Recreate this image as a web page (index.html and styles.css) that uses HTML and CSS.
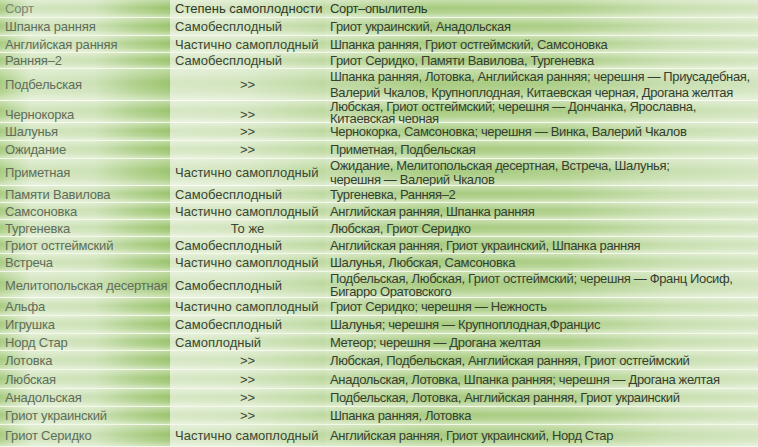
FILE: index.html
```html
<!DOCTYPE html>
<html lang="ru">
<head>
<meta charset="utf-8">
<title>Сорта вишни</title>
<link rel="stylesheet" href="styles.css">
</head>
<body>
<div class="grid" role="table">
  <div class="row head h18" role="row">
    <div class="cell name" role="columnheader">Сорт</div>
    <div class="cell fert" role="columnheader">Степень самоплодности</div>
    <div class="cell poll" role="columnheader">Сорт–опылитель</div>
  </div>
  <div class="row h18" role="row"><div class="cell name">Шпанка ранняя</div><div class="cell fert">Самобесплодный</div><div class="cell poll">Гриот украинский, Анадольская</div></div>
  <div class="row h17" role="row"><div class="cell name">Английская ранняя</div><div class="cell fert">Частично самоплодный</div><div class="cell poll">Шпанка ранняя, Гриот остгеймский, Самсоновка</div></div>
  <div class="row h16" role="row"><div class="cell name">Ранняя–2</div><div class="cell fert">Самобесплодный</div><div class="cell poll">Гриот Серидко, Памяти Вавилова, Тургеневка</div></div>
  <div class="row h32 lh16" role="row"><div class="cell name">Подбельская</div><div class="cell fert mid">&gt;&gt;</div><div class="cell poll">Шпанка ранняя, Лотовка, Английская ранняя; черешня — Приусадебная,<br>Валерий Чкалов, Крупноплодная, Китаевская черная, Дрогана желтая</div></div>
  <div class="row h22 lh12" role="row"><div class="cell name">Чернокорка</div><div class="cell fert mid">&gt;&gt;</div><div class="cell poll">Любская, Гриот остгеймский; черешня — Дончанка, Ярославна,<br>Китаевская черная</div></div>
  <div class="row h18" role="row"><div class="cell name">Шалунья</div><div class="cell fert mid">&gt;&gt;</div><div class="cell poll">Чернокорка, Самсоновка; черешня — Винка, Валерий Чкалов</div></div>
  <div class="row h18" role="row"><div class="cell name">Ожидание</div><div class="cell fert mid">&gt;&gt;</div><div class="cell poll">Приметная, Подбельская</div></div>
  <div class="row h27 lh14" role="row"><div class="cell name">Приметная</div><div class="cell fert">Частично самоплодный</div><div class="cell poll">Ожидание, Мелитопольская десертная, Встреча, Шалунья;<br>черешня — Валерий Чкалов</div></div>
  <div class="row h17" role="row"><div class="cell name">Памяти Вавилова</div><div class="cell fert">Самобесплодный</div><div class="cell poll">Тургеневка, Ранняя–2</div></div>
  <div class="row h17" role="row"><div class="cell name">Самсоновка</div><div class="cell fert">Частично самоплодный</div><div class="cell poll">Английская ранняя, Шпанка ранняя</div></div>
  <div class="row h17" role="row"><div class="cell name">Тургеневка</div><div class="cell fert mid">То же</div><div class="cell poll">Любская, Гриот Серидко</div></div>
  <div class="row h17" role="row"><div class="cell name">Гриот остгеймский</div><div class="cell fert">Самобесплодный</div><div class="cell poll">Английская ранняя, Гриот украинский, Шпанка ранняя</div></div>
  <div class="row h18" role="row"><div class="cell name">Встреча</div><div class="cell fert">Частично самоплодный</div><div class="cell poll">Шалунья, Любская, Самсоновка</div></div>
  <div class="row h26 lh13" role="row"><div class="cell name">Мелитопольская десертная</div><div class="cell fert">Самобесплодный</div><div class="cell poll">Подбельская, Любская, Гриот остгеймский; черешня — Франц Иосиф,<br>Бигарро Оратовского</div></div>
  <div class="row h18" role="row"><div class="cell name">Альфа</div><div class="cell fert">Частично самоплодный</div><div class="cell poll">Гриот Серидко; черешня — Нежность</div></div>
  <div class="row h18" role="row"><div class="cell name">Игрушка</div><div class="cell fert">Самобесплодный</div><div class="cell poll">Шалунья; черешня — Крупноплодная,Францис</div></div>
  <div class="row h17" role="row"><div class="cell name">Норд Стар</div><div class="cell fert">Самоплодный</div><div class="cell poll">Метеор; черешня — Дрогана желтая</div></div>
  <div class="row h19" role="row"><div class="cell name">Лотовка</div><div class="cell fert mid">&gt;&gt;</div><div class="cell poll">Любская, Подбельская, Английская ранняя, Гриот остгеймский</div></div>
  <div class="row h19" role="row"><div class="cell name">Любская</div><div class="cell fert mid">&gt;&gt;</div><div class="cell poll">Анадольская, Лотовка, Шпанка ранняя; черешня — Дрогана желтая</div></div>
  <div class="row h18" role="row"><div class="cell name">Анадольская</div><div class="cell fert mid">&gt;&gt;</div><div class="cell poll">Подбельская, Лотовка, Английская ранняя, Гриот украинский</div></div>
  <div class="row h18" role="row"><div class="cell name">Гриот украинский</div><div class="cell fert mid">&gt;&gt;</div><div class="cell poll">Шпанка ранняя, Лотовка</div></div>
  <div class="row h22" role="row"><div class="cell name">Гриот Серидко</div><div class="cell fert">Частично самоплодный</div><div class="cell poll">Английская ранняя, Гриот украинский, Норд Стар</div></div>
</div>
</body>
</html>
```
FILE: styles.css
```css
html, body {
  margin: 0;
  padding: 0;
  background: #dfe9cf;
  overflow: hidden;
}

.grid {
  width: 758px;
  display: flex;
  flex-direction: column;
  font-family: "Liberation Sans", Arial, sans-serif;
  font-size: 13px;
  color: #3b4736;
}

.row {
  display: grid;
  grid-template-columns: 170px 155px 433px;
  box-sizing: border-box;
  border-bottom: 1px solid rgba(248, 252, 240, 0.9);
  line-height: 15px;
  background-image:
    linear-gradient(180deg, rgba(255,255,255,0.3) 0%, rgba(255,255,255,0) 40%, rgba(255,255,255,0.05) 75%, rgba(255,255,255,0.35) 100%),
    linear-gradient(180deg, #a4ca7a 0%, #9bc46e 50%, #b0d18a 100%);
  flex: none;
}

.h16 { height: 16px; }
.h17 { height: 17px; }
.h18 { height: 18px; }
.h19 { height: 19px; }
.h22 { height: 22px; }
.h26 { height: 26px; }
.h27 { height: 27px; }
.h32 { height: 32px; }

.lh12 { line-height: 12px; }
.lh13 { line-height: 13px; }
.lh14 { line-height: 14px; }
.lh16 { line-height: 16px; }

.lh12 .poll { padding-bottom: 3px; }

.cell {
  display: flex;
  align-items: center;
  padding-left: 5px;
  white-space: nowrap;
  min-width: 0;
}

.name {
  color: #5f6d5c;
  letter-spacing: -0.2px;
  background: linear-gradient(90deg, rgba(255,255,255,0.12) 0%, rgba(255,255,255,0.55) 18%, rgba(255,255,255,0.5) 55%, rgba(255,255,255,0.2) 80%, rgba(255,255,255,0) 100%);
}

.fert {
  color: #3a4636;
  background: linear-gradient(90deg, rgba(255,255,255,0.6) 0%, rgba(255,255,255,0.55) 50%, rgba(255,255,255,0.35) 100%);
}

.fert.mid {
  justify-content: center;
  padding-left: 0;
}

.poll {
  color: #353f31;
  letter-spacing: -0.36px;
  background: linear-gradient(90deg, rgba(255,255,255,0.4) 0%, rgba(255,255,255,0.12) 25%, rgba(255,255,255,0.18) 55%, rgba(255,255,255,0.45) 80%, rgba(255,255,255,0.55) 100%);
}

.head .name { color: #7b857a; }
.head .fert,
.head .poll { color: #2c3828; }
```
